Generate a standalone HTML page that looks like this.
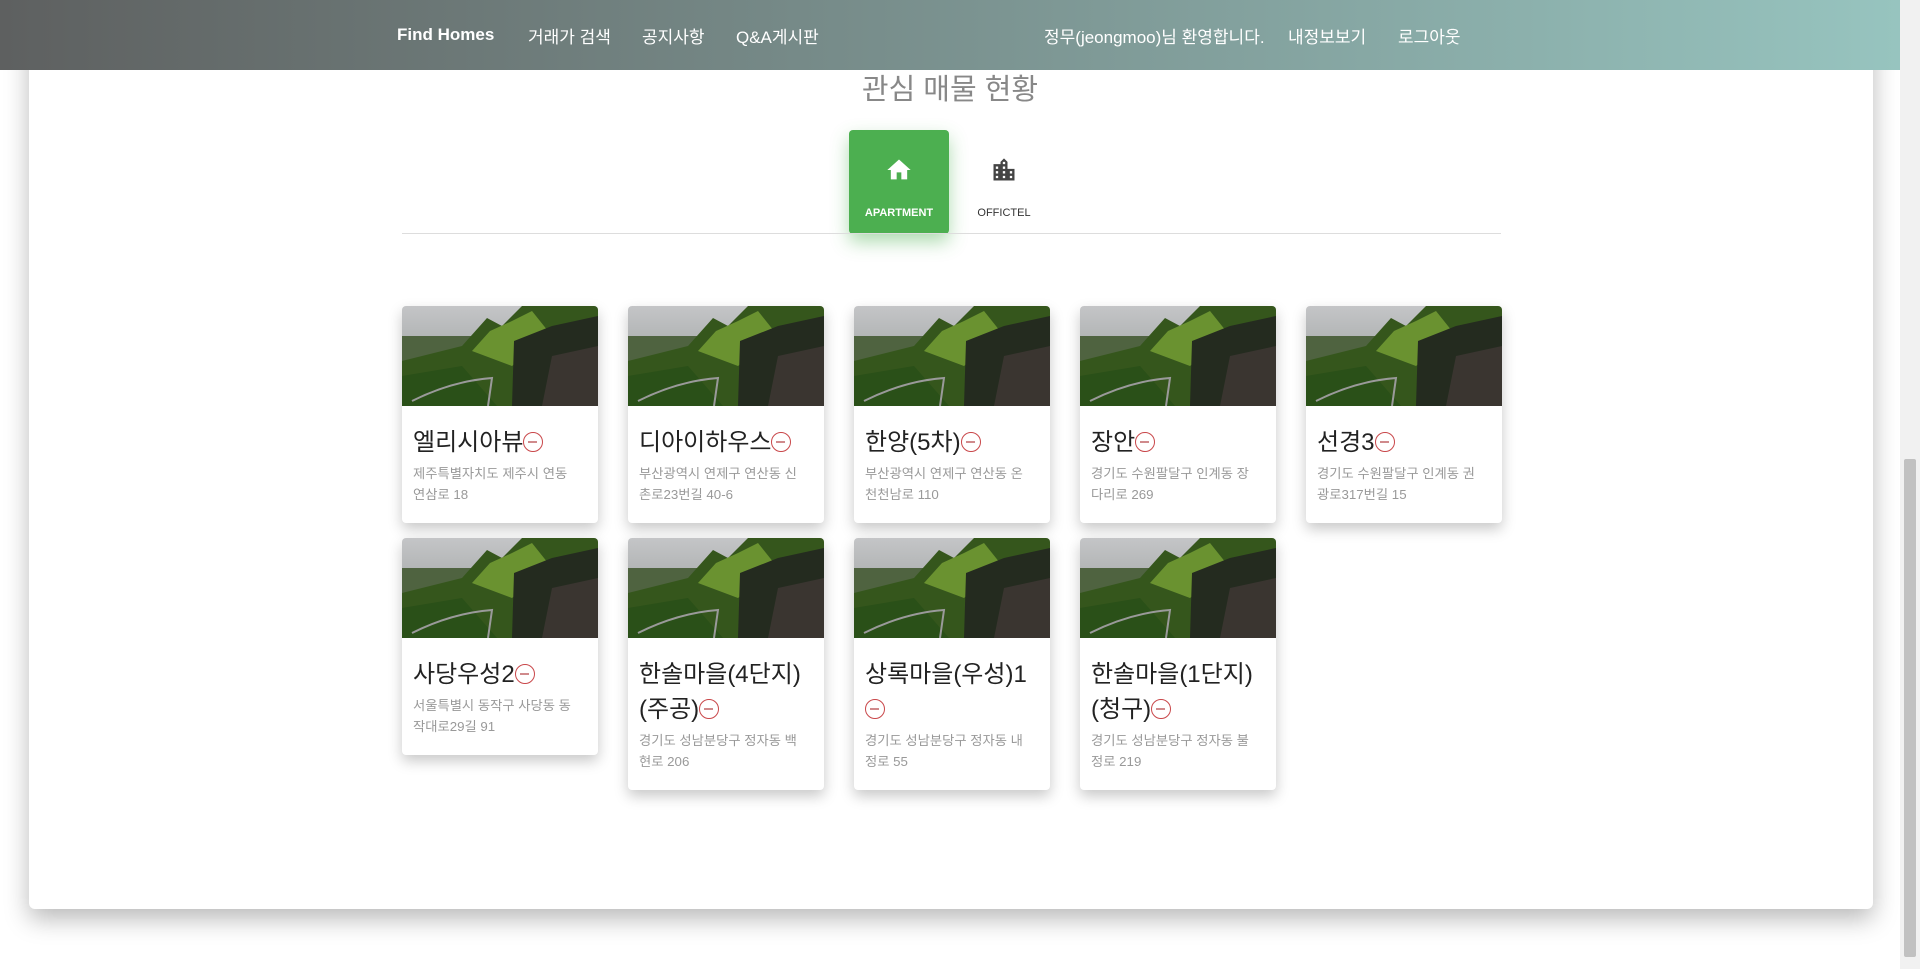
<!DOCTYPE html>
<html><head><meta charset="utf-8"><style>
*{margin:0;padding:0;box-sizing:border-box}
body{width:1920px;height:969px;overflow:hidden;background:#fff;font-family:"Liberation Sans","Noto Sans CJK KR",sans-serif;position:relative}
.nav{position:absolute;left:0;top:0;width:1900px;height:70px;background:linear-gradient(90deg,#5e6060,#97c4bf);z-index:5;color:#fff}
.nav span{position:absolute;top:23px;font-size:17px;white-space:nowrap}
.box{position:absolute;left:29px;top:-40px;width:1844px;height:949px;background:#fff;border-radius:6px;box-shadow:0 10px 25px rgba(0,0,0,.28)}
.title{position:absolute;left:0;width:1900px;text-align:center;top:66px;font-size:29px;color:#888}
.tab{position:absolute;top:130px;width:100px;height:104px;text-align:center;font-size:11px;font-weight:bold}
.tab.on{background:#4caf50;color:#fff;border-radius:4px;box-shadow:0 8px 18px rgba(76,175,80,.45)}
.tab svg{position:absolute;left:36px;top:26px}
.tab b{position:absolute;left:0;right:0;top:77px}
.line{position:absolute;left:402px;top:233px;width:1099px;height:1px;background:#ddd}
.card{position:absolute;width:196px;background:#fff;border-radius:4px;box-shadow:0 6px 14px rgba(0,0,0,.22);overflow:hidden}
.card svg{display:block}
.cb{padding:19px 14px 18px 11px}
.cb h3{font-weight:normal;font-size:24px;line-height:35px;color:#222}
.cb p{font-size:13.3px;line-height:21px;color:#999;margin-top:3px;margin-right:6px}
.m{display:inline-block;width:20px;height:20px;border:1.5px solid #c9474a;border-radius:50%;position:relative;vertical-align:-2px}
.m:after{content:"";position:absolute;left:4px;top:7.5px;width:9px;height:2px;background:#d08a8c}
.sb{position:absolute;left:1900px;top:0;width:20px;height:969px;background:#f1f1f1}
.sb i{position:absolute;left:4px;top:459px;width:12px;height:498px;background:#c1c1c1;border-radius:2px}
</style></head><body>
<svg width="0" height="0" style="position:absolute"><defs>
<linearGradient id="sky" x1="0" y1="0" x2="0" y2="1"><stop offset="0" stop-color="#c4c5c7"/><stop offset="1" stop-color="#8e9491"/></linearGradient>
<symbol id="land" viewBox="0 0 196 100">
<rect width="196" height="100" fill="url(#sky)"/>
<rect y="30" width="196" height="70" fill="#4f6340"/>
<path d="M0 55 L60 40 L85 12 L100 20 L120 0 L196 0 L196 100 L0 100Z" fill="#35561c"/>
<path d="M70 45 L88 25 L110 15 L130 5 L150 30 L110 60 Z" fill="#6a9230"/>
<path d="M112 35 L150 20 L196 10 L196 100 L110 100 Z" fill="#242b1f"/>
<path d="M150 50 L196 40 L196 100 L140 100Z" fill="#3a3530"/>
<path d="M0 100 L0 70 L60 60 L95 100Z" fill="#2a5018"/>
<path d="M10 95 Q50 75 90 72 L86 100" stroke="#9a9a9a" stroke-width="2" fill="none"/>
</symbol></defs></svg>
<div class="box"></div>
<div class="nav">
<span style="left:397px;font-weight:bold;top:25px">Find Homes</span>
<span style="left:528px">거래가 검색</span>
<span style="left:642px">공지사항</span>
<span style="left:736px">Q&amp;A게시판</span>
<span style="left:1044px">정무(jeongmoo)님 환영합니다.</span>
<span style="left:1288px">내정보보기</span>
<span style="left:1398px">로그아웃</span>
</div>
<div class="title">관심 매물 현황</div>
<div class="tab on" style="left:849px"><svg width="28" height="28" viewBox="0 0 24 24"><path d="M10 20v-6h4v6h5v-8h3L12 3 2 12h3v8z" fill="#fff"/></svg><b>APARTMENT</b></div>
<div class="tab" style="left:954px;color:#333"><svg width="28" height="28" viewBox="0 0 24 24"><path d="M15 11V5l-3-3-3 3v2H3v14h18V11h-6zm-8 8H5v-2h2v2zm0-4H5v-2h2v2zm0-4H5V9h2v2zm6 8h-2v-2h2v2zm0-4h-2v-2h2v2zm0-4h-2V9h2v2zm0-4h-2V5h2v2zm6 12h-2v-2h2v2zm0-4h-2v-2h2v2z" fill="#444"/></svg><b style="font-weight:normal">OFFICTEL</b></div>
<div class="line"></div>

<div class="card" style="left:402px;top:306px"><svg width="196" height="100"><use href="#land"/></svg><div class="cb"><h3>엘리시아뷰<i class="m"></i></h3><p>제주특별자치도 제주시 연동 연삼로 18</p></div></div>
<div class="card" style="left:628px;top:306px"><svg width="196" height="100"><use href="#land"/></svg><div class="cb"><h3>디아이하우스<i class="m"></i></h3><p>부산광역시 연제구 연산동 신촌로23번길 40-6</p></div></div>
<div class="card" style="left:854px;top:306px"><svg width="196" height="100"><use href="#land"/></svg><div class="cb"><h3>한양(5차)<i class="m"></i></h3><p>부산광역시 연제구 연산동 온천천남로 110</p></div></div>
<div class="card" style="left:1080px;top:306px"><svg width="196" height="100"><use href="#land"/></svg><div class="cb"><h3>장안<i class="m"></i></h3><p>경기도 수원팔달구 인계동 장다리로 269</p></div></div>
<div class="card" style="left:1306px;top:306px"><svg width="196" height="100"><use href="#land"/></svg><div class="cb"><h3>선경3<i class="m"></i></h3><p>경기도 수원팔달구 인계동 권광로317번길 15</p></div></div>

<div class="card" style="left:402px;top:538px"><svg width="196" height="100"><use href="#land"/></svg><div class="cb"><h3>사당우성2<i class="m"></i></h3><p>서울특별시 동작구 사당동 동작대로29길 91</p></div></div>
<div class="card" style="left:628px;top:538px"><svg width="196" height="100"><use href="#land"/></svg><div class="cb"><h3>한솔마을(4단지)(주공)<i class="m"></i></h3><p>경기도 성남분당구 정자동 백현로 206</p></div></div>
<div class="card" style="left:854px;top:538px"><svg width="196" height="100"><use href="#land"/></svg><div class="cb"><h3>상록마을(우성)1<i class="m"></i></h3><p>경기도 성남분당구 정자동 내정로 55</p></div></div>
<div class="card" style="left:1080px;top:538px"><svg width="196" height="100"><use href="#land"/></svg><div class="cb"><h3>한솔마을(1단지)(청구)<i class="m"></i></h3><p>경기도 성남분당구 정자동 불정로 219</p></div></div>

<div class="sb"><i></i></div>
</body></html>
